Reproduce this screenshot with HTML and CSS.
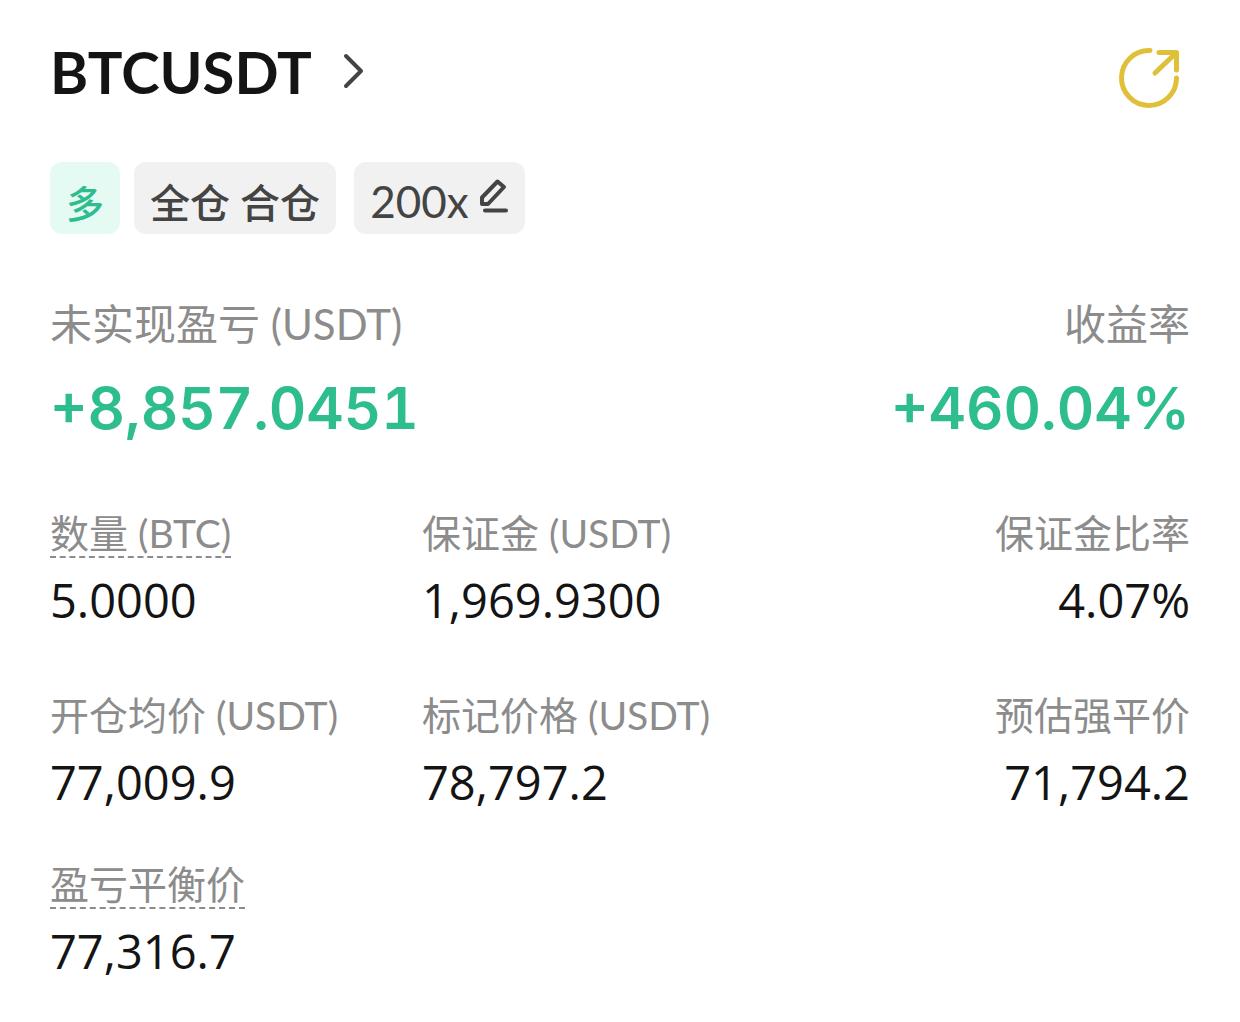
FILE: index.html
```html
<!DOCTYPE html>
<html lang="zh-CN">
<head>
  <meta charset="UTF-8">
  <meta name="viewport" content="width=device-width, initial-scale=1.0">
  <title>BTCUSDT</title>
  <link rel="stylesheet" href="styles.css">
</head>
<body>
  <main class="position">
    <header class="head">
      <h1><a href="#" class="symbol">BTCUSDT
        <svg class="arrow" viewBox="0 0 24 40" aria-hidden="true"><path d="M4 4l15 15L4 34"/></svg>
      </a></h1>
      <button type="button" class="share" aria-label="分享">
        <svg viewBox="0 0 64 64" aria-hidden="true"><path d="M32 4.500A27.500 27.500 0 1 0 58.500 32M37 27L58 7M41 6.500H58.500V24"/></svg>
      </button>
    </header>

    <div class="tags">
      <span class="tag long">多</span>
      <span class="tag mode">全仓 合仓</span>
      <button type="button" class="tag lever">200x
        <svg class="pen" viewBox="0 0 30 36" aria-hidden="true"><path d="M3 26V19.500L18.500 3.500L25 9L9 26ZM6 32.500H27"/></svg>
      </button>
    </div>

    <dl class="profit">
      <div class="item">
        <dt>未实现盈亏 (USDT)</dt>
        <dd>+8,857.0451</dd>
      </div>
      <div class="item right">
        <dt>收益率</dt>
        <dd>+460.04%</dd>
      </div>
    </dl>

    <dl class="detail">
      <div class="item">
        <dt><span class="tip">数量 (BTC)</span></dt>
        <dd>5.0000</dd>
      </div>
      <div class="item">
        <dt>保证金 (USDT)</dt>
        <dd>1,969.9300</dd>
      </div>
      <div class="item right">
        <dt>保证金比率</dt>
        <dd>4.07%</dd>
      </div>
      <div class="item">
        <dt>开仓均价 (USDT)</dt>
        <dd>77,009.9</dd>
      </div>
      <div class="item">
        <dt>标记价格 (USDT)</dt>
        <dd>78,797.2</dd>
      </div>
      <div class="item right">
        <dt>预估强平价</dt>
        <dd>71,794.2</dd>
      </div>
      <div class="item">
        <dt><span class="tip">盈亏平衡价</span></dt>
        <dd>77,316.7</dd>
      </div>
    </dl>
  </main>
</body>
</html>
```

FILE: styles.css
```css
*{margin: 0;padding: 0;box-sizing: border-box;}
body{background: #fff;color: #141414;font-family: Lato, "Noto Sans CJK SC", sans-serif;}
button{border: 0;background: none;font: inherit;color: inherit;cursor: pointer;}
svg{display: block;fill: none;stroke: currentColor;stroke-linecap: round;stroke-linejoin: round;}

.position{padding: 38px 50px;}

/* 标题 */
.head{display: flex;justify-content: space-between;align-items: flex-end;height: 72px;padding-right: 8px;}
.head h1{align-self: flex-start;}
.symbol{display: flex;align-items: center;gap: 30px;color: inherit;font-size: 58px;line-height: 68px;font-weight: 700;text-decoration: none;}
.arrow{width: 24px;height: 40px;stroke: #444;stroke-width: 4;}
.share{color: #dfc038;}
.share svg{width: 64px;height: 64px;stroke-width: 5;}

/* 标签 */
.tags{display: flex;margin-top: 52px;gap: 14px;}
.tag{display: flex;align-items: center;height: 72px;padding: 6px 16px 0;border-radius: 12px;background: #f1f1f1;color: #444;font-size: 40px;}
.long{background: #e6faf4;color: #2ebd8e;font-size: 38px;font-weight: 500;}
.mode{font-weight: 500;}
.lever{gap: 10px;margin-left: 4px;font-size: 44px;}
.pen{width: 30px;height: 36px;margin-bottom: 10px;stroke-width: 4;}

/* 数据 */
dt{color: #8c8c8c;}
dd{font-family: "Open Sans", sans-serif;}
.right{text-align: right;}
.profit{display: flex;justify-content: space-between;margin-top: 60px;}
.profit dt{font-size: 42px;line-height: 60px;}
.profit dd{margin-top: 18px;color: #2ebd8e;font-family: Inter, sans-serif;font-size: 58px;line-height: 72px;font-weight: 600;font-variant-numeric: tabular-nums;}
.detail{display: grid;grid-template-columns: 372px 1fr auto;margin-top: 61px;row-gap: 46px;}
.detail dt{font-size: 39px;line-height: 56px;}
.detail dd{margin-top: 11px;font-size: 47px;line-height: 56px;}
.detail .item:nth-child(-n+3){padding-bottom: 13px;}
.tip{border-bottom: 2px dashed #8c8c8c;}
```
